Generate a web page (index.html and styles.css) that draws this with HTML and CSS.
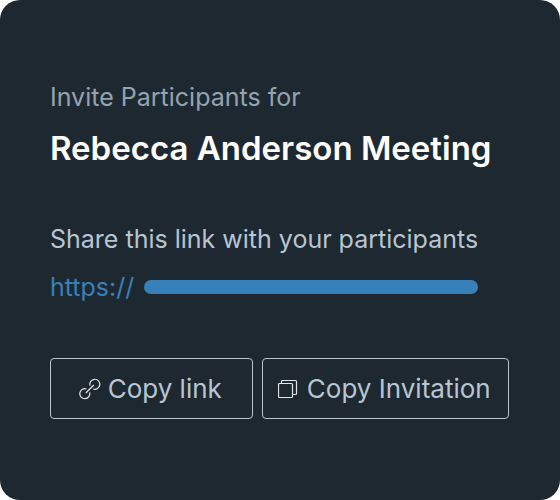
FILE: index.html
```html
<!DOCTYPE html>
<html lang="en">
<head>
  <meta charset="UTF-8" />
  <meta name="viewport" content="width=device-width, initial-scale=1.0" />
  <title>Invite Participants</title>
  <link rel="stylesheet" href="styles.css">
</head>
<body>
  <main class="invite">
    <p class="subtitle">Invite Participants for</p>
    <h1 class="title">Rebecca Anderson Meeting</h1>

    <div class="share">
      <p class="share-text">Share this link with your participants</p>
      <a class="share-link" href="#" aria-label="Meeting link">https://<span class="link-bar"></span></a>
    </div>

    <div class="actions">
      <button class="btn" type="button">
        <svg class="icon" viewBox="0 0 22 22" aria-hidden="true">
          <path d="M7.4 11A5 5 0 1 0 10.6 14.4M14.2 11A5 5 0 1 0 11 7.6M6.8 15L14.8 7" />
        </svg>
        Copy link
      </button>
      <button class="btn" type="button">
        <svg class="icon" viewBox="0 0 22 22" aria-hidden="true">
          <rect x="0.5" y="5.5" width="14" height="14" rx="1" />
          <path d="M3.5 5.5V3.5a1 1 0 0 1 1-1h13a1 1 0 0 1 1 1v12a1 1 0 0 1-1 1h-3" />
        </svg>
        Copy Invitation
      </button>
    </div>
  </main>
</body>
</html>
```

FILE: styles.css
```css
* { box-sizing: border-box; }
body {
  margin: 0;
  background: #fff;
  font-family: 'Inter', sans-serif;
}
.invite {
  min-height: 100vh;
  padding: 80px 51px 80px 50px;
  background: #1e2830;
  border-radius: 20px;
}
p, h1 { margin: 0; }
.subtitle {
  font-size: 25px;
  line-height: 34px;
  color: #94a3b0;
}
.title {
  margin-top: 12px;
  font-size: 33px;
  line-height: 44px;
  font-weight: 600;
  color: #fff;
}
.share {
  display: flex;
  flex-direction: column;
  gap: 14px;
  width: fit-content;
  margin-top: 52px;
}
.share-text {
  font-size: 25px;
  line-height: 34px;
  color: #b8c5d3;
}
.share-link {
  display: flex;
  align-items: center;
  gap: 10px;
  font-size: 25px;
  line-height: 34px;
  color: #3880ba;
  text-decoration: none;
}
.link-bar {
  flex: 1;
  height: 14px;
  border-radius: 7px;
  background: #3880ba;
}
.actions {
  display: grid;
  grid-template-columns: 9fr 11fr;
  gap: 9px;
  margin-top: 54px;
}
.btn {
  display: flex;
  align-items: center;
  justify-content: center;
  gap: 7px;
  height: 61px;
  padding: 0 2px 0 0;
  border: 1px solid #b8c5d3;
  border-radius: 4px;
  background: none;
  color: #b8c5d3;
  font-family: inherit;
  font-size: 26px;
  white-space: nowrap;
  cursor: pointer;
}
.icon {
  width: 22px;
  height: 22px;
  fill: none;
  stroke: #e2e6ea;
  stroke-width: 1.2;
}
```
